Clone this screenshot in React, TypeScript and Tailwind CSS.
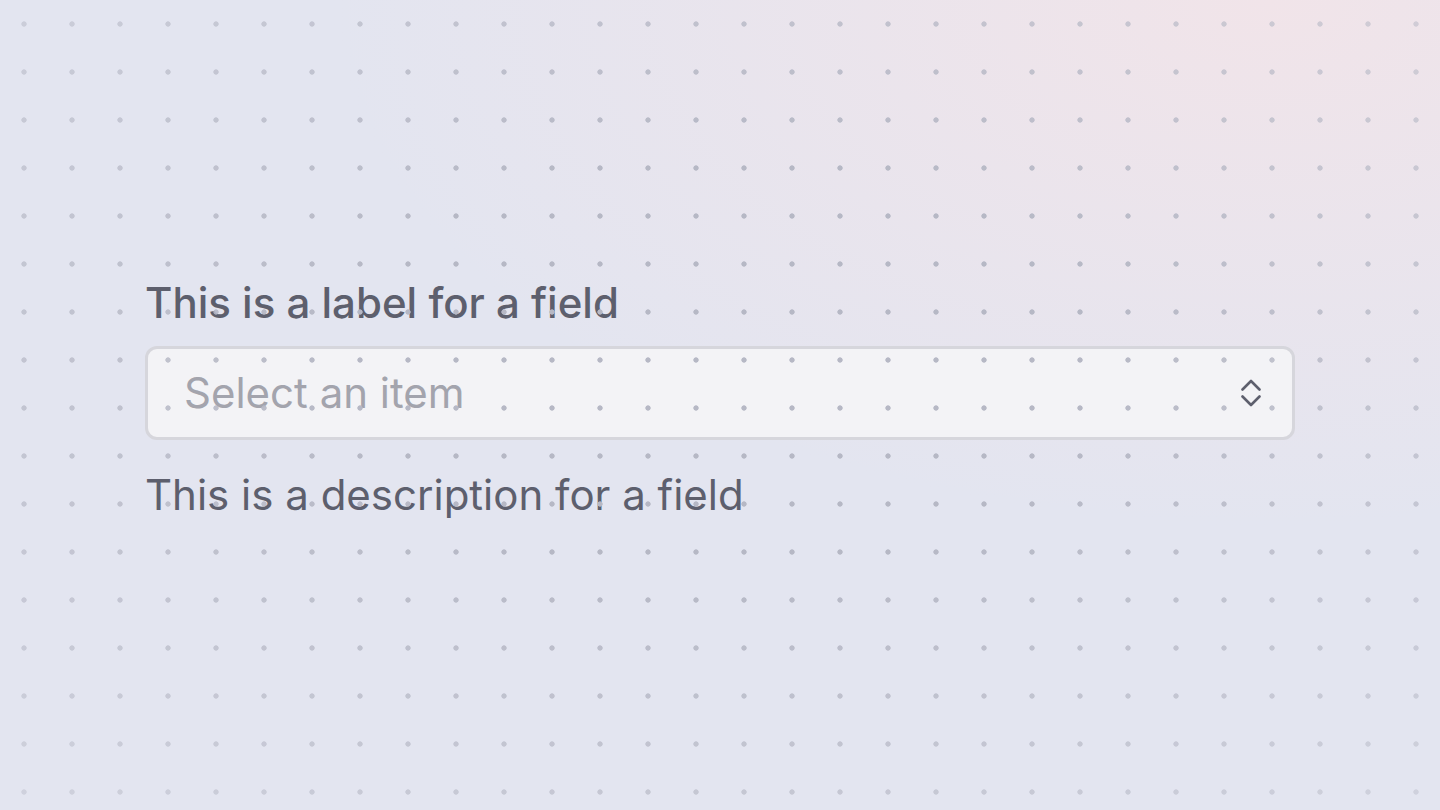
export default function App() {
  return (
    <div
      className="relative h-screen w-full overflow-hidden bg-[#e3e5f0]"
      style={{ fontFamily: "Inter, 'Noto Sans', sans-serif" }}
    >
      <div className="pointer-events-none absolute inset-0 bg-[radial-gradient(ellipse_65%_65%_at_88%_0%,#f1e4e9_0%,rgba(241,228,233,0.55)_45%,rgba(241,228,233,0)_100%)]" />

      <div className="relative flex flex-col px-[145px] pt-[278px]">
        <label className="text-[42px] leading-[50px] font-medium text-[#5d5f6d]">This is a label for a field</label>

        <button className="mt-[18px] flex h-[94px] w-[1150px] items-center justify-between rounded-[12px] border-[3px] border-[#d6d6dc] bg-[#f3f3f6] pl-[36px] pr-[31px] text-left">
          <span className="text-[42px] leading-[50px] text-[#a3a4ad]">Select an item</span>
          <svg width="20" height="28" viewBox="0 0 20 28" fill="none" stroke="#5d5f6d" strokeWidth="2.6" strokeLinecap="round" strokeLinejoin="round">
            <path d="M1.5 10.5 10 2l8.5 8.5" />
            <path d="M1.5 17.5 10 26l8.5-8.5" />
          </svg>
        </button>

        <p className="mt-[30px] text-[42px] leading-[50px] text-[#5d5f6d]">This is a description for a field</p>
      </div>

      {/* dot grid sits over everything */}
      <div className="pointer-events-none absolute inset-0 z-10 bg-[radial-gradient(circle,#b6b8c5_2.3px,transparent_3px)] bg-[size:48px_48px] [mask-image:radial-gradient(ellipse_75%_75%_at_50%_45%,#000_35%,rgba(0,0,0,0.4)_100%)]" />
    </div>
  )
}
